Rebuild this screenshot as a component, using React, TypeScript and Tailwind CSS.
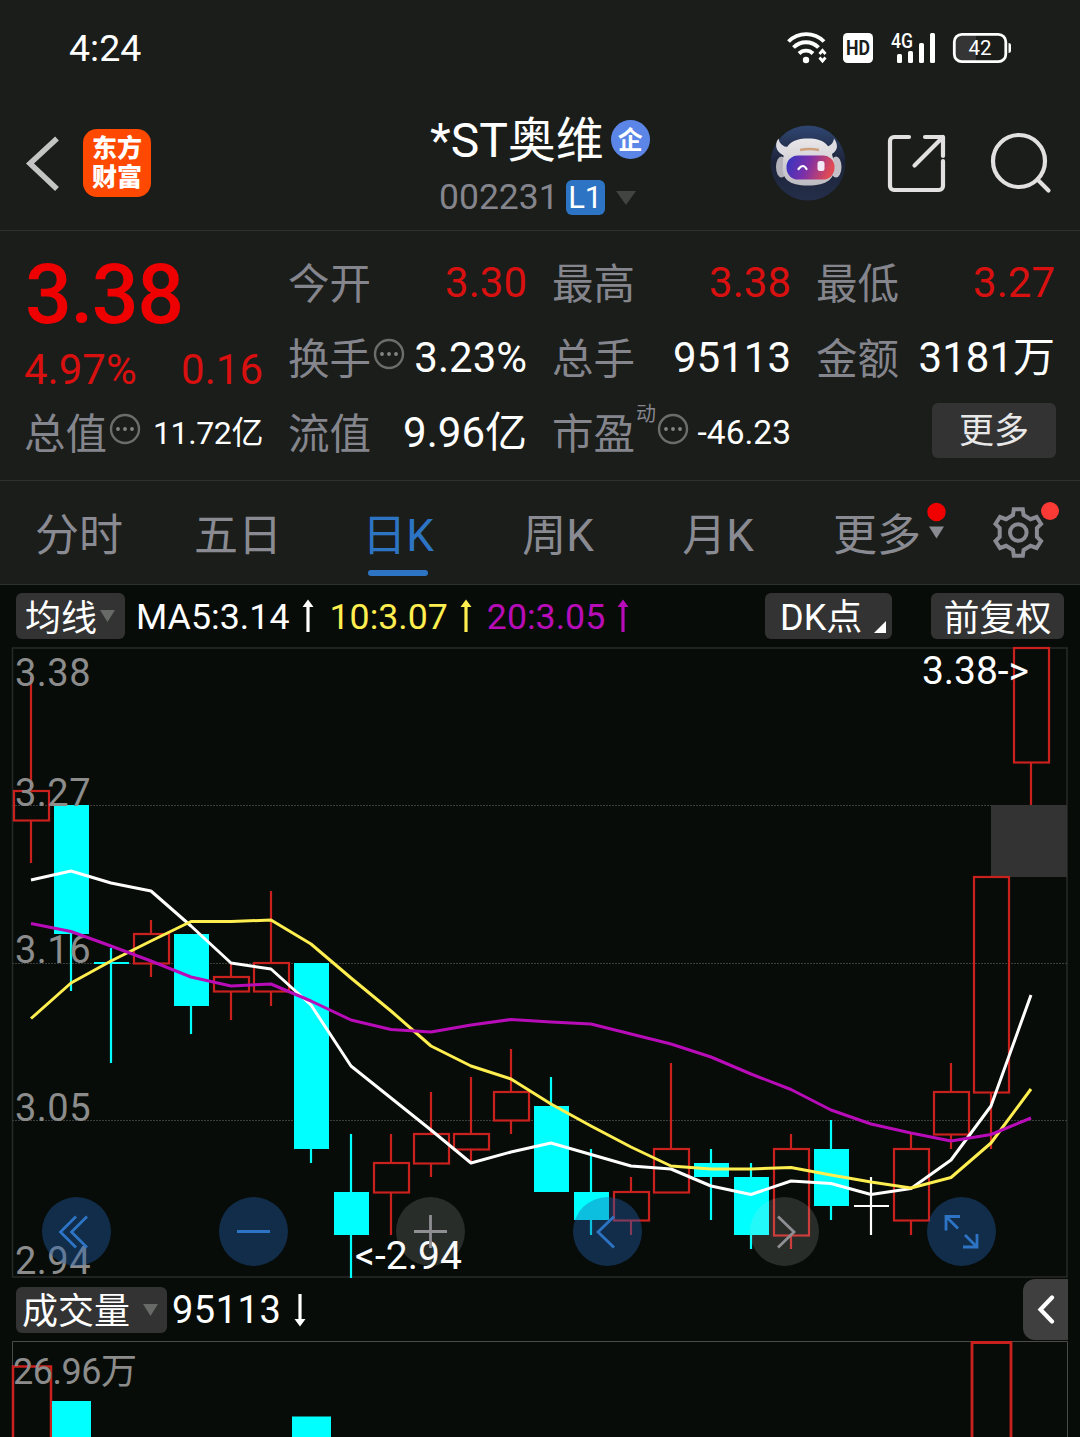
import type { ReactNode } from "react";

type Candle = { open: number; close: number; high: number; low: number };

const candles: Candle[] = [
  { open: 3.26, close: 3.28, high: 3.36, low: 3.23 },
  { open: 3.27, close: 3.18, high: 3.27, low: 3.14 },
  { open: 3.16, close: 3.16, high: 3.17, low: 3.09 },
  { open: 3.16, close: 3.18, high: 3.19, low: 3.15 },
  { open: 3.18, close: 3.13, high: 3.18, low: 3.11 },
  { open: 3.14, close: 3.15, high: 3.16, low: 3.12 },
  { open: 3.14, close: 3.16, high: 3.21, low: 3.13 },
  { open: 3.16, close: 3.03, high: 3.16, low: 3.02 },
  { open: 3.0, close: 2.97, high: 3.04, low: 2.94 },
  { open: 3.0, close: 3.02, high: 3.04, low: 2.97 },
  { open: 3.02, close: 3.04, high: 3.07, low: 3.01 },
  { open: 3.03, close: 3.04, high: 3.08, low: 3.02 },
  { open: 3.05, close: 3.07, high: 3.1, low: 3.04 },
  { open: 3.06, close: 3.0, high: 3.08, low: 3.0 },
  { open: 3.0, close: 2.98, high: 3.03, low: 2.97 },
  { open: 2.98, close: 3.0, high: 3.01, low: 2.97 },
  { open: 3.0, close: 3.03, high: 3.09, low: 3.0 },
  { open: 3.02, close: 3.01, high: 3.03, low: 2.98 },
  { open: 3.01, close: 2.97, high: 3.02, low: 2.96 },
  { open: 2.97, close: 3.03, high: 3.04, low: 2.96 },
  { open: 3.03, close: 2.99, high: 3.05, low: 2.98 },
  { open: 2.99, close: 2.99, high: 3.01, low: 2.97 },
  { open: 2.98, close: 3.03, high: 3.04, low: 2.97 },
  { open: 3.04, close: 3.07, high: 3.09, low: 3.03 },
  { open: 3.07, close: 3.22, high: 3.22, low: 3.03 },
  { open: 3.3, close: 3.38, high: 3.38, low: 3.27 },
];

// moving averages, already in chart pixels
const ma5 = [234, 225, 237, 245, 280, 317, 323, 359, 420, 452, 484, 517, 506, 497, 508.5, 520, 523, 540, 548.5, 535, 537.5, 548.5, 542.5, 514, 460, 349];
const ma10 = [372.5, 337, 315, 295, 275.5, 275.5, 274, 298, 332, 365, 400, 420, 433, 458, 480, 501, 520, 523, 523, 521.5, 529, 536, 542, 531.5, 497, 443];
const ma20 = [277.5, 285.5, 300, 315, 331, 340, 338, 355, 374, 383.5, 386, 379, 373.5, 376, 378, 388, 398, 411, 428, 443.5, 464, 478, 487, 495, 488.5, 472];

const RED = "#c9211e";
const CYAN = "#00ffff";

const xAt = (i: number) => 31 + i * 40;
const yAt = (price: number) => Math.round(2 + (3.38 - price) * 1430.7);
const toPoints = (values: number[]) => values.map((v, i) => `${xAt(i)},${v}`).join(" ");

export default function App() {

  return (

    <div className="w-[1080px] h-[1437px] overflow-hidden bg-[#1a1d1a] text-white font-['Roboto','Noto_Sans_CJK_SC',sans-serif]">

      <StatusBar />
      <Header />
      <Quote />
      <Tabs />

      {/* CHARTS */}

      <div className="h-[852px] bg-[#070c08]">
        <MaBar />
        <PriceChart />
        <VolumeBar />
        <VolumeChart />
      </div>

    </div>

  );

}

function StatusBar() {

  return (

    <div className="flex h-[96px] items-center justify-between pl-[69px] pr-[68px]">

      <span className="pt-[1px] text-[37.5px] leading-none">4:24</span>

      <svg width="226" height="40" viewBox="786 28 226 40" fill="none">
        <g stroke="#fff" strokeWidth="3.9">
          <path d="M788.5 41.5a25 25 0 0 1 35.5 0" />
          <path d="M793.5 47.5a17.5 17.5 0 0 1 25 0" />
          <path d="M799 53.5a10 10 0 0 1 14 0" />
        </g>
        <circle cx="806" cy="60" r="3.2" fill="#fff" />
        <path d="M819.5 54l3-3.500 3 3.500M819.5 57.500l3 3.500 3-3.500" stroke="#fff" strokeWidth="2.8" />
        <rect x="843" y="33" width="30" height="30" rx="4.5" fill="#fff" />
        <text x="858" y="55" fontSize="21" fontWeight="700" fill="#1a1d1a" textAnchor="middle" textLength="24" lengthAdjust="spacingAndGlyphs">HD</text>
        <text x="891" y="47.5" fontSize="20" fontWeight="500" fill="#fff" textLength="22" lengthAdjust="spacingAndGlyphs">4G</text>
        <g fill="#fff">
          <rect x="897" y="54" width="5" height="9" rx="1.5" />
          <rect x="908" y="51" width="5" height="12" rx="1.5" />
          <rect x="919" y="43" width="5" height="20" rx="1.5" />
          <rect x="930" y="33" width="5" height="30" rx="1.5" />
        </g>
        <path d="M961 35h15v26h-15a6 6 0 0 1-6-6V41a6 6 0 0 1 6-6z" fill="#353535" />
        <rect x="954.3" y="34.3" width="51.5" height="27.4" rx="7.5" stroke="#fff" strokeWidth="2.8" />
        <path d="M1008.5 43q2.5 0 2.5 2v6q0 2-2.5 2z" fill="#fff" />
        <text x="980" y="55.3" fontSize="20.5" fill="#fff" textAnchor="middle">42</text>
      </svg>

    </div>

  );

}

function Header() {

  return (

    <div className="flex h-[135px] items-start border-b border-[#2f312f] pl-[24px] pr-[28px]">

      <div className="flex w-[300px] items-center pt-[33px]">
        <svg width="38" height="68" viewBox="24 129 38 68" fill="none">
          <path d="M57 138.500L30 163.500l27 25.500" stroke="#c4c4c4" strokeWidth="5.5" />
        </svg>
        <div className="ml-[21px] flex h-[68px] w-[68px] flex-col items-center justify-center rounded-[14px] bg-[#ff4800] text-[25px] leading-[29px] font-black">
          <span>东方</span>
          <span>财富</span>
        </div>
      </div>

      <div className="flex flex-1 flex-col pt-[15px] pl-[106px]">
        <div className="flex h-[56px] items-center">
          <span className="pt-[4px] text-[48px] leading-none whitespace-nowrap">*ST奥维</span>
          <span className="ml-[7px] flex h-[39px] w-[39px] items-center justify-center rounded-full bg-[#5b86e8] pt-[2px] text-[25px] leading-none font-bold">企</span>
        </div>
        <div className="flex h-[56px] items-center pt-[5px] pl-[9px]">
          <span className="pt-[1px] text-[35.5px] leading-none text-[#85858d]">002231</span>
          <span className="ml-[7px] flex h-[35px] w-[39px] items-center justify-center rounded-md bg-[#2e74c4] text-[31px] leading-none">L1</span>
          <svg className="ml-[10px]" width="22" height="16" viewBox="0 0 22 16">
            <path d="M1 1h20L11 15z" fill="#424442" />
          </svg>
        </div>
      </div>

      <div className="flex items-center pt-[29px]">
        <Robot />
        <svg className="ml-[40px]" width="62" height="62" viewBox="886 132 62 62" fill="none" stroke="#e2e0e1" strokeWidth="4.2" strokeLinecap="round" strokeLinejoin="round">
          <path d="M909 137h-15a4 4 0 0 0-4 4v45a4 4 0 0 0 4 4h45a4 4 0 0 0 4-4v-25" />
          <path d="M925 137h18v19M943 137l-28.5 28.5" />
        </svg>
        <svg className="ml-[40px]" width="64" height="64" viewBox="988 131 64 64" fill="none" stroke="#e2e0e1" strokeWidth="4.2" strokeLinecap="round">
          <circle cx="1019" cy="161" r="26" />
          <path d="M1037.5 179.5l11 11" />
        </svg>
      </div>

    </div>

  );

}

function Robot() {

  return (

    <svg width="76" height="76" viewBox="0 0 76 76">
      <defs>
        <linearGradient id="sky" x1="0" y1="0" x2="0" y2="1">
          <stop offset="0" stopColor="#2f4672" />
          <stop offset="0.5" stopColor="#1c2338" />
          <stop offset="1" stopColor="#252f4b" />
        </linearGradient>
        <linearGradient id="visor" x1="0" y1="0" x2="1" y2="0.2">
          <stop offset="0" stopColor="#2f35c4" />
          <stop offset="0.5" stopColor="#7c30a8" />
          <stop offset="1" stopColor="#e04a55" />
        </linearGradient>
        <linearGradient id="shell" x1="0" y1="0" x2="0" y2="1">
          <stop offset="0" stopColor="#e9e7e9" />
          <stop offset="1" stopColor="#bdbbc2" />
        </linearGradient>
      </defs>
      <circle cx="38" cy="38" r="37.5" fill="url(#sky)" />
      <path d="M8.500 13.500c-5 7-2 14 7 18l7-10c-8 2-13-2-14-8zM64 13.500c5 7 4 13-5 17l-7-9c7 1 11-2 12-8z" fill="#dddce2" />
      <ellipse cx="11.500" cy="42" rx="5.5" ry="10.5" fill="#b3b2ba" />
      <ellipse cx="66" cy="42" rx="5.5" ry="10.5" fill="#c4c2c8" />
      <path d="M13 39c0-18 8-25.500 25-25.500s24 7.500 26 25.500c2 15-7 21.500-26 21.500s-27-6.500-25-21.500z" fill="url(#shell)" />
      <rect x="16.5" y="30.5" width="48" height="24" rx="11.5" fill="url(#visor)" />
      <path d="M30 25q9-2 19 0" stroke="#cfa07e" strokeWidth="2.5" fill="none" />
      <path d="M28.500 44q4.500-6 8 0" stroke="#fff" strokeWidth="2.2" fill="none" strokeLinecap="round" />
      <rect x="47.5" y="36" width="7" height="10" rx="2.5" fill="#f3eaf7" />
    </svg>

  );

}

function Quote() {

  return (

    <div className="flex h-[250px] gap-[25px] border-b border-[#2f312f] pt-[14px] pl-[24px]">

      <div className="w-[239px]">
        <div className="flex h-[100px] items-center pl-[1px] text-[82.5px] leading-none font-medium tracking-[-1.500px] text-[#ef0000]">3.38</div>
        <div className="flex h-[50px] items-center justify-between text-[42px] leading-none text-[#d81010]">
          <span>4.97%</span>
          <span>0.16</span>
        </div>
        <Stat label="总值" value="11.72亿" info size="text-[32px] tracking-[-0.400px]" />
      </div>

      <div className="w-[239px]">
        <Stat label="今开" value="3.30" red />
        <Stat label="换手" value="3.23%" info />
        <Stat label="流值" value="9.96亿" />
      </div>

      <div className="w-[239px]">
        <Stat label="最高" value="3.38" red />
        <Stat label="总手" value="95113" />
        <Stat label="市盈" value="-46.23" sup="动" info size="text-[33.5px]" />
      </div>

      <div className="w-[239px]">
        <Stat label="最低" value="3.27" red />
        <Stat label="金额" value="3181万" />
        <div className="-mr-[1px] flex h-[71px] items-center justify-end">
          <button className="h-[55px] w-[124px] rounded-md bg-[#333333] pt-[2px] text-[35px] leading-none text-[#e8e8e8]">更多</button>
        </div>
      </div>

    </div>

  );

}

type StatProps = { label: string; value: string; sup?: string; red?: boolean; info?: boolean; size?: string };

function Stat({ label, value, sup, red, info, size = "text-[42px]" }: StatProps) {

  return (

    <div className="flex h-[75px] items-center leading-none whitespace-nowrap">
      <span className="pt-[5px] text-[41.5px] text-[#85858d]">{label}</span>
      {sup && <span className="ml-[1px] -mr-[1px] -mt-[38px] text-[20px] text-[#85858d]">{sup}</span>}
      {info && (
        <svg className="ml-[2px] -mt-[7px] shrink-0" width="32" height="32" viewBox="0 0 32 32">
          <circle cx="16" cy="16" r="14" fill="none" stroke="#6c6c6c" strokeWidth="2.4" />
          <g fill="#858585">
            <circle cx="9" cy="16" r="1.9" />
            <circle cx="16" cy="16" r="1.9" />
            <circle cx="23" cy="16" r="1.9" />
          </g>
        </svg>
      )}
      <span className={`ml-auto ${size} ${red ? "text-[#d81010]" : "text-white"}`}>{value}</span>
    </div>

  );

}

function Tabs() {

  return (

    <div className="flex h-[104px] border-b border-[#2f312f] text-[44px] leading-none text-[#8a8a92]">

      <Tab width="w-[158px]">分时</Tab>
      <Tab width="w-[160px]">五日</Tab>
      <Tab width="w-[160px]" active>日K</Tab>
      <Tab width="w-[160px]">周K</Tab>
      <Tab width="w-[160px]">月K</Tab>

      <div className="flex w-[160px] items-start pl-[35px]">
        <span className="pt-[33px] whitespace-nowrap">更多</span>
        <svg className="ml-[5px] mt-[19px] shrink-0" width="22" height="60" viewBox="926 500 22 60">
          <circle cx="936.5" cy="512" r="9.2" fill="#f00000" />
          <path d="M929 526.500h15l-7.500 12z" fill="#8a8a92" />
        </svg>
      </div>

      <svg className="ml-[32px] mt-[17px]" width="72" height="68" viewBox="990 498 72 68" fill="none">
        <g transform="translate(1018.3 532.5)" stroke="#8a8a92" strokeWidth="4">
          <path d="M-4.500-23.200h9L5.300-17.500 12.200-13.300l6.100-2.200 4.500 7-4.200 4.200v8.600l4.200 4.200-4.500 7-6.100-2.200L5.300 17.500 4.500 23.200h-9L-5.300 17.500-12.200 13.300l-6.100 2.200-4.500-7 4.200-4.200v-8.600l-4.200-4.200 4.500-7 6.100 2.200L-5.300-17.500z" />
          <circle r="8.3" />
        </g>
        <circle cx="1050" cy="511" r="9" fill="#fb3a36" />
      </svg>

    </div>

  );

}

function Tab({ width, active, children }: { width: string; active?: boolean; children: ReactNode }) {

  return (

    <div className={`${width} flex flex-col items-center`}>
      <span className={`mt-[33px] h-[56px] ${active ? "text-[#2e74c4]" : ""}`}>{children}</span>
      {active && <span className="h-[6px] w-[60px] rounded-full bg-[#2e74c4]" />}
    </div>

  );

}

function Arrow({ down }: { down?: boolean }) {

  return (

    <svg className={`shrink-0 ${down ? "rotate-180" : ""}`} width="12" height="34" viewBox="0 0 12 34">
      <path d="M6 .5l5.500 7.500H7.600V33H4.400V8H.5z" fill="currentColor" />
    </svg>

  );

}

function MaBar() {

  return (

    <div className="flex h-[61px] items-center pl-[16px] pr-[16px] pt-[1px] text-[36px] leading-none whitespace-nowrap">

      <div className="flex h-[46px] w-[109px] items-center rounded-md bg-[#333333] pl-[9px]">
        <span className="pt-[5px]">均线</span>
        <svg className="ml-[3px]" width="15" height="12" viewBox="0 0 15 12">
          <path d="M0 0h15L7.500 12z" fill="#686a68" />
        </svg>
      </div>

      <div className="ml-[11px] flex items-center gap-[12px]">
        <span className="pt-[3px] text-[35.8px]">MA5:3.14</span>
        <Arrow />
      </div>
      <div className="ml-[16px] flex items-center gap-[12px] text-[#ffee4f]">
        <span className="pt-[3px] text-[35.7px]">10:3.07</span>
        <Arrow />
      </div>
      <div className="ml-[15px] flex items-center gap-[12px] text-[#b80cb8]">
        <span className="pt-[3px] text-[35.7px]">20:3.05</span>
        <Arrow />
      </div>

      <div className="ml-auto flex h-[46px] w-[127px] items-center rounded-md bg-[#333333] pl-[15px]">
        <span className="pt-[4px]">DK点</span>
        <svg className="ml-auto mr-[6px] mt-[22px]" width="12" height="12" viewBox="0 0 12 12">
          <path d="M12 0v12H0z" fill="#fff" />
        </svg>
      </div>
      <div className="ml-[39px] flex h-[46px] w-[133px] items-center justify-center rounded-md bg-[#333333] pt-[5px]">前复权</div>

    </div>

  );

}

function PriceChart() {

  return (

    <div className="relative h-[632px]">

      <svg className="overflow-visible" width="1080" height="632" viewBox="0 0 1080 632" fill="none">

        {/* frame and grid */}
        <rect x="12.500" y="2" width="1054.500" height="629" stroke="#282a28" strokeWidth="1.5" />
        {[3.27, 3.16, 3.05].map((p) => (
          <line key={p} x1="12" x2="1067" y1={yAt(p) + 0.5} y2={yAt(p) + 0.5} stroke="#3c3e3c" strokeDasharray="2 1" />
        ))}

        {/* open gap */}
        <rect x="991" y={yAt(3.27)} width="76" height={yAt(3.22) - yAt(3.27)} fill="#333333" />

        {candles.map((c, i) => (
          <CandleShape key={i} candle={c} x={xAt(i)} />
        ))}

        <AxisLabel y={40}>3.38</AxisLabel>
        <AxisLabel y={160}>3.27</AxisLabel>
        <AxisLabel y={317}>3.16</AxisLabel>
        <AxisLabel y={475}>3.05</AxisLabel>
        <AxisLabel y={627.5}>2.94</AxisLabel>

        <g strokeWidth="3" strokeLinejoin="round">
          <polyline points={toPoints(ma5)} stroke="#ffffff" />
          <polyline points={toPoints(ma10)} stroke="#ffee4f" />
          <polyline points={toPoints(ma20)} stroke="#b80cb8" />
        </g>

        <g fill="#fff" fontSize="39">
          <text x="922" y="38" textLength="107">3.38-&gt;</text>
          <text x="355" y="623" textLength="107">&lt;-2.94</text>
        </g>

      </svg>

      {/* zoom and scroll controls */}
      <div className="absolute left-[42px] top-[551px] flex gap-[108px]">
        <RoundButton><path d="M34 19.500L18.500 35 34 50.500M45 19.500L29.500 35 45 50.500" /></RoundButton>
        <RoundButton><path d="M18 34.500h33" /></RoundButton>
        <RoundButton muted><path d="M18 34.500h33M34.500 18v33" /></RoundButton>
        <RoundButton><path d="M41 19.500L25 35 41 50.500" /></RoundButton>
        <RoundButton muted><path d="M28 19.500l16 15.500L28 50.500" /></RoundButton>
        <RoundButton><path d="M19 33.500V19.500h14M19.500 20L31 31.500M50 37v13H36M49.500 49.500L38 38" /></RoundButton>
      </div>

    </div>

  );

}

function AxisLabel({ y, children }: { y: number; children: string }) {

  return <text x="15" y={y} fontSize="38" fill="#8c8c8c" textLength="75.5">{children}</text>;

}

function CandleShape({ candle, x }: { candle: Candle; x: number }) {

  const top = yAt(Math.max(candle.open, candle.close));
  const bottom = yAt(Math.min(candle.open, candle.close));
  const high = yAt(candle.high);
  const low = yAt(candle.low);

  if (candle.open === candle.close) {
    const color = candle.high === 3.17 ? CYAN : "#ffffff";
    return <path d={`M${x} ${high}V${low}M${x - 17} ${top}h35`} stroke={color} strokeWidth="2.2" />;
  }

  if (candle.close > candle.open) {
    return (
      <g stroke={RED} strokeWidth="2.2">
        <rect x={x - 17} y={top} width="35" height={bottom - top + 0.5} />
        <path d={`M${x} ${high}V${top}M${x} ${bottom}V${low}`} />
      </g>
    );
  }

  return (
    <g>
      <path d={`M${x} ${high}V${low}`} stroke={CYAN} strokeWidth="2.2" />
      <rect x={x - 17} y={top} width="35" height={bottom - top} fill={CYAN} />
    </g>
  );

}

function RoundButton({ muted, children }: { muted?: boolean; children: ReactNode }) {

  return (

    <button className={`h-[69px] w-[69px] rounded-full ${muted ? "bg-[#d8d8d8]/16" : "bg-[#2060b0]/40"}`}>
      <svg width="69" height="69" viewBox="0 0 69 69" fill="none" stroke={muted ? "#8e8e93" : "#2e74c4"} strokeWidth="2.8">
        {children}
      </svg>
    </button>

  );

}

function VolumeBar() {

  return (

    <div className="flex h-[63px] items-center pl-[16px] pr-[12px] text-[36px] leading-none whitespace-nowrap">

      <div className="flex h-[46px] w-[151px] items-center rounded-md bg-[#333333] pl-[6px]">
        <span className="pt-[5px]">成交量</span>
        <svg className="ml-[13px]" width="15" height="12" viewBox="0 0 15 12">
          <path d="M0 0h15L7.500 12z" fill="#686a68" />
        </svg>
      </div>
      <span className="ml-[5px] mr-[13px] text-[38px] tracking-[0.500px]">95113</span>
      <Arrow down />

      <button className="ml-auto flex h-[61px] w-[45px] items-center justify-center rounded-l-xl bg-[#3e3f3e]">
        <svg width="20" height="30" viewBox="0 0 20 30" fill="none">
          <path d="M16 2.500L4.500 14.500l11.500 12" stroke="#fff" strokeWidth="4.2" strokeLinecap="round" />
        </svg>
      </button>

    </div>

  );

}

function VolumeChart() {

  return (

    <svg width="1080" height="96" viewBox="0 0 1080 96" fill="none">
      <path d="M12.500 96V.5h1055V96" stroke="#4a4c4a" />
      <path d="M13 96V25.500h38V96" stroke={RED} strokeWidth="2.5" />
      <rect x="52" y="60" width="39" height="36" fill={CYAN} />
      <rect x="292" y="75.5" width="39" height="21" fill={CYAN} />
      <path d="M972 96V1.500h39V96" stroke={RED} strokeWidth="2.8" />
      <text x="13" y="43" fontSize="36" fill="#8c8c8c" textLength="124">26.96万</text>
    </svg>

  );

}
